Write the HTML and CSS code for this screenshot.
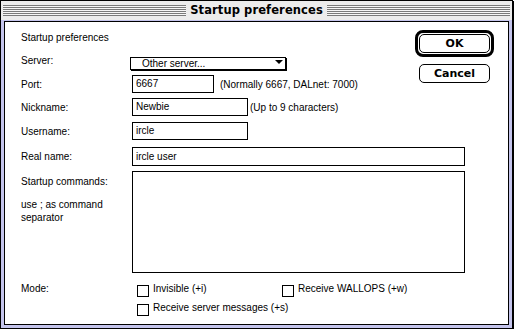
FILE: index.html
```html
<!DOCTYPE html>
<html>
<head>
<meta charset="utf-8">
<link rel="stylesheet" href="styles.css">
</head>
<body>
<div class="window">
  <div class="titlebar">
    <div class="stripes"></div>
    <span class="title">Startup preferences</span>
    <div class="stripes"></div>
  </div>
  <div class="frame">
    <div class="content">
      <div class="top">
        <div class="top-left">
          <div class="header">Startup preferences</div>
          <div class="row server-row">
            <span class="label">Server:</span>
            <div class="popup"><span class="popup-text">Other server...</span><span class="arrow"></span></div>
          </div>
          <div class="row field-row port-row">
            <span class="label">Port:</span>
            <div class="field port-field">6667</div>
            <span class="note port-note">(Normally 6667, DALnet: 7000)</span>
          </div>
        </div>
        <div class="buttons">
          <div class="default-ring"><div class="btn">OK</div></div>
          <div class="btn cancel">Cancel</div>
        </div>
      </div>
      <div class="row field-row nick-row">
        <span class="label">Nickname:</span>
        <div class="field mid-field">Newbie</div>
        <span class="note nick-note">(Up to 9 characters)</span>
      </div>
      <div class="row field-row user-row">
        <span class="label">Username:</span>
        <div class="field mid-field">ircle</div>
      </div>
      <div class="row field-row real-row">
        <span class="label">Real name:</span>
        <div class="field wide-field">ircle user</div>
      </div>
      <div class="row cmd-row">
        <div class="label cmd-label">
          <div>Startup commands:</div>
          <div class="hint">use ; as command<br>separator</div>
        </div>
        <div class="textarea"></div>
      </div>
      <div class="row mode-row">
        <span class="label">Mode:</span>
        <div class="options">
          <label class="option opt-a"><span class="check"></span><span>Invisible (+i)</span></label>
          <label class="option"><span class="check"></span><span>Receive WALLOPS (+w)</span></label>
        </div>
      </div>
      <div class="row mode-row2">
        <span class="label"></span>
        <div class="options">
          <label class="option"><span class="check"></span><span>Receive server messages (+s)</span></label>
        </div>
      </div>
    </div>
  </div>
</div>
</body>
</html>
```
FILE: styles.css
```css
* { box-sizing: border-box; }

body {
  margin: 0;
  background: #fff;
  font-family: "Liberation Sans", Arial, sans-serif;
  font-size: 10px;
  color: #000;
}

.window {
  width: 513px;
  height: 329px;
  border: 1px solid #000;
  box-shadow: 1px 1px 0 #000;
  background: #c4c4ec;
  display: flex;
  flex-direction: column;
}

.titlebar {
  height: 19px;
  display: flex;
  align-items: center;
  padding: 0 2px;
  background: #ececec;
}

.stripes {
  flex: 1;
  height: 11px;
  background: repeating-linear-gradient(to bottom, #7a7a7a 0 1px, #f6f6f6 1px 2px);
}

.title {
  font-family: "DejaVu Sans", sans-serif;
  font-weight: bold;
  font-size: 11.5px;
  line-height: 19px;
  padding: 0 4px;
  letter-spacing: 0.1px;
}

.frame {
  flex: 1;
  display: flex;
  padding: 1px 3px 3px 3px;
}

.content {
  flex: 1;
  background: #fff;
  border: 1px solid #000;
  padding: 0 14px 0 16px;
}

.top {
  display: flex;
}

.top-left {
  flex: 1;
}

.header {
  margin-top: 8px;
  height: 16px;
  line-height: 16px;
}

.row {
  display: flex;
  align-items: center;
}

.label {
  width: 111px;
  flex: none;
}

.server-row {
  margin-top: 9px;
  height: 16px;
  align-items: flex-start;
}

.server-row .label {
  line-height: 12px;
}

.popup {
  margin-top: 2px;
  margin-left: -2px;
  width: 156px;
  height: 13px;
  border: 1px solid #000;
  box-shadow: 1px 1px 0 #000;
  display: flex;
  align-items: flex-start;
  padding-left: 11px;
  padding-right: 2px;
}

.popup-text {
  flex: 1;
  line-height: 11px;
}

.arrow {
  margin-top: 2px;
  width: 0;
  height: 0;
  border-left: 4px solid transparent;
  border-right: 4px solid transparent;
  border-top: 4px solid #000;
}

.field-row {
  height: 18px;
}

.field {
  height: 100%;
  border: 1px solid #000;
  padding-left: 3px;
  line-height: 16px;
}

.port-row { margin-top: 4px; }
.nick-row { margin-top: 5px; }
.user-row { margin-top: 6px; }
.real-row { margin-top: 7px; height: 19px; }

.port-field { width: 82px; }
.mid-field { width: 116px; }
.wide-field { width: 333px; line-height: 17px; }

.port-note { margin-left: 6px; }
.nick-note { margin-left: 2px; }

.buttons {
  width: 79px;
  display: flex;
  flex-direction: column;
  align-items: center;
}

.default-ring {
  margin-top: 8px;
  width: 79px;
  height: 27px;
  border: 3px solid #000;
  border-radius: 8px;
  padding: 1px;
}

.btn {
  width: 71px;
  height: 19px;
  border: 1px solid #000;
  border-radius: 5px;
  font-family: "DejaVu Sans", sans-serif;
  font-weight: bold;
  font-size: 11px;
  line-height: 17px;
  text-align: center;
}

.cancel {
  margin-top: 7px;
}

.cmd-row {
  margin-top: 5px;
  align-items: flex-start;
}

.cmd-label {
  padding-top: 4px;
  line-height: 13px;
}

.hint {
  margin-top: 10px;
}

.textarea {
  width: 333px;
  height: 102px;
  border: 1px solid #000;
}

.mode-row {
  margin-top: 10px;
  height: 14px;
  align-items: flex-start;
  line-height: 12px;
}

.mode-row2 {
  margin-top: 5px;
  height: 14px;
  align-items: flex-start;
  line-height: 12px;
}

.options {
  display: flex;
  padding-left: 5px;
}

.option {
  display: flex;
  align-items: flex-start;
}

.opt-a {
  width: 145px;
}

.check {
  width: 12px;
  height: 12px;
  margin-top: 2px;
  margin-right: 4px;
  border: 1px solid #000;
  flex: none;
}
```
